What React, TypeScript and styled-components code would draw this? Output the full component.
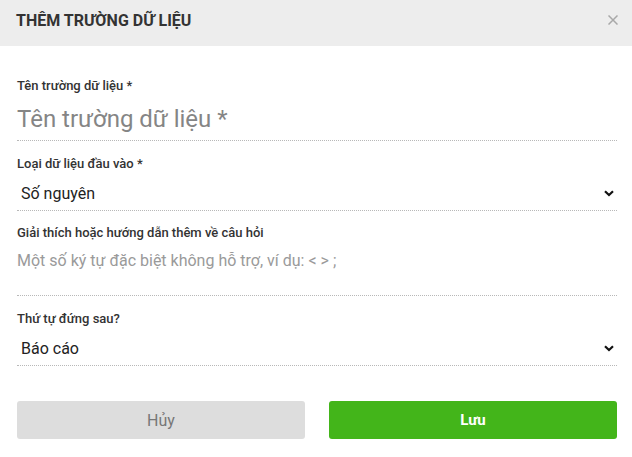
import * as React from "react";
import styled, { createGlobalStyle } from "styled-components";

const GlobalStyle = createGlobalStyle`
  html, body {
    margin: 0;
    padding: 0;
    background: #fff;
  }
  body {
    font-family: Roboto, "Liberation Sans", Arial, sans-serif;
  }
  * {
    box-sizing: border-box;
  }
`;

const S = {
  Dialog: styled.div`
    width: 632px;
    height: 457px;
    background: #fff;
    display: flex;
    flex-direction: column;
  `,
  Header: styled.div`
    height: 46px;
    flex: none;
    background: #ededed;
    padding: 11px 14px 0 16px;
    display: flex;
    align-items: flex-start;
    justify-content: space-between;
  `,
  Title: styled.h2`
    margin: 0;
    font-size: 16px;
    line-height: 19px;
    font-weight: 700;
    color: #333;
    text-transform: uppercase;
  `,
  Close: styled.button`
    border: 0;
    background: none;
    padding: 0;
    margin-top: 4px;
    width: 10px;
    height: 10px;
    cursor: pointer;
    display: flex;
    svg {
      display: block;
    }
  `,
  Body: styled.div`
    padding: 32px 15px 0 17px;
    display: flex;
    flex-direction: column;
  `,
  Field: styled.div<{ $top?: number }>`
    display: flex;
    flex-direction: column;
    margin-top: ${(p) => p.$top ?? 0}px;
  `,
  Label: styled.label<{ $gap: number }>`
    font-size: 13px;
    line-height: 16px;
    font-weight: 500;
    color: #333;
    margin-bottom: ${(p) => p.$gap}px;
  `,
  Input: styled.input`
    font-family: inherit;
    font-size: 24px;
    line-height: 28px;
    height: 36px;
    padding: 0 0 7px;
    border: 0;
    border-bottom: 1px dotted #b8b8b8;
    outline: none;
    color: #333;
    &::placeholder {
      color: #858585;
    }
  `,
  SelectWrap: styled.div`
    position: relative;
  `,
  Select: styled.select`
    appearance: none;
    width: 100%;
    font-family: inherit;
    font-size: 16px;
    height: 30px;
    padding: 0 30px 5px 4px;
    border: 0;
    border-bottom: 1px dotted #b8b8b8;
    border-radius: 0;
    background: #fff;
    color: #222;
    outline: none;
  `,
  Chevron: styled.svg`
    position: absolute;
    right: 3px;
    top: 9px;
    pointer-events: none;
  `,
  TextArea: styled.textarea`
    font-family: inherit;
    font-size: 16px;
    line-height: 20px;
    height: 51px;
    padding: 6px 0 0;
    border: 0;
    border-bottom: 1px dotted #b8b8b8;
    resize: none;
    outline: none;
    color: #333;
    &::placeholder {
      color: #9a9a9a;
    }
  `,
  Actions: styled.div`
    margin-top: 35px;
    display: grid;
    grid-template-columns: 1fr 1fr;
    gap: 24px;
  `,
  Button: styled.button<{ $primary?: boolean }>`
    height: 38px;
    border: 0;
    border-radius: 3px;
    font-family: inherit;
    font-size: ${(p) => (p.$primary ? "15px" : "16px")};
    font-weight: ${(p) => (p.$primary ? 700 : 400)};
    color: ${(p) => (p.$primary ? "#fff" : "#777")};
    background: ${(p) => (p.$primary ? "#43b51a" : "#dddddd")};
    cursor: pointer;
  `
};

const ChevronDown = () => (
  <S.Chevron width="10" height="7" viewBox="0 0 10 7">
    <path d="M1 1.2 L5 5 L9 1.2" fill="none" stroke="#111" strokeWidth="2.2" />
  </S.Chevron>
);

const App: React.FC = () => {
  return (
    <>
      <GlobalStyle />
      <S.Dialog>
        <S.Header>
          <S.Title>Thêm trường dữ liệu</S.Title>
          <S.Close aria-label="Đóng">
            <svg width="10" height="10" viewBox="0 0 10 10">
              <path d="M0.5 0.5 L9.5 9.5 M9.5 0.5 L0.5 9.5" stroke="#a8a8a8" strokeWidth="1.5" />
            </svg>
          </S.Close>
        </S.Header>
        <S.Body>
          <S.Field>
            <S.Label $gap={11}>Tên trường dữ liệu *</S.Label>
            <S.Input placeholder="Tên trường dữ liệu *" />
          </S.Field>
          <S.Field $top={15}>
            <S.Label $gap={9}>Loại dữ liệu đầu vào *</S.Label>
            <S.SelectWrap>
              <S.Select defaultValue="int">
                <option value="int">Số nguyên</option>
                <option value="float">Số thực</option>
                <option value="text">Văn bản</option>
              </S.Select>
              <ChevronDown />
            </S.SelectWrap>
          </S.Field>
          <S.Field $top={14}>
            <S.Label $gap={4}>Giải thích hoặc hướng dẫn thêm về câu hỏi</S.Label>
            <S.TextArea placeholder="Một số ký tự đặc biệt không hỗ trợ, ví dụ: < > ;" />
          </S.Field>
          <S.Field $top={15}>
            <S.Label $gap={9}>Thứ tự đứng sau?</S.Label>
            <S.SelectWrap>
              <S.Select defaultValue="report">
                <option value="report">Báo cáo</option>
              </S.Select>
              <ChevronDown />
            </S.SelectWrap>
          </S.Field>
          <S.Actions>
            <S.Button>Hủy</S.Button>
            <S.Button $primary>Lưu</S.Button>
          </S.Actions>
        </S.Body>
      </S.Dialog>
    </>
  );
};

export default App;
